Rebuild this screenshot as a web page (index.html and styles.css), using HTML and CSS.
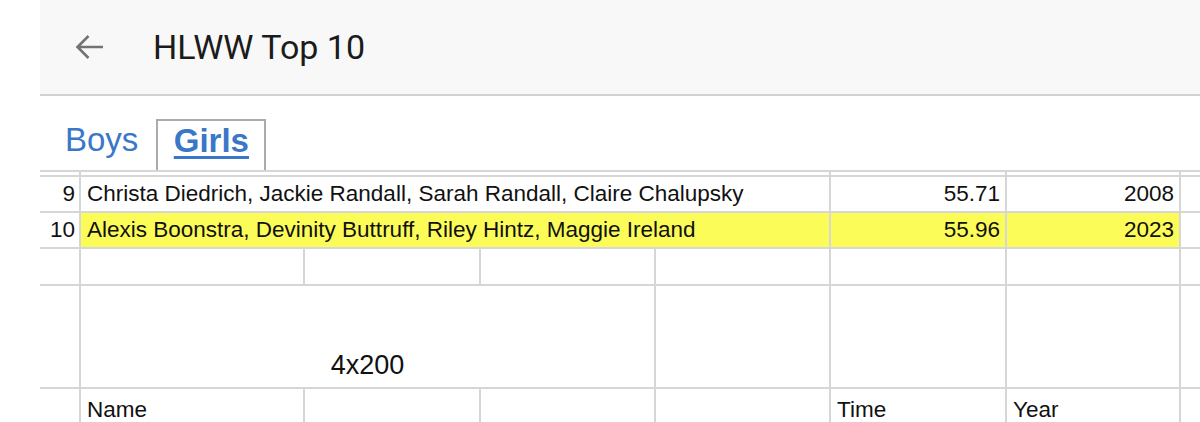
FILE: index.html
```html
<!DOCTYPE html>
<html lang="en">
<head>
<meta charset="utf-8">
<title>HLWW Top 10</title>
<link rel="stylesheet" href="styles.css">
</head>
<body>
<div class="page">
  <header class="appbar">
    <svg class="back" width="30" height="26" viewBox="0 0 30 26" aria-hidden="true">
      <path d="M29 13 H3.5 M14.5 2 L3.5 13 L14.5 24" fill="none" stroke="#737373" stroke-width="2.6"/>
    </svg>
    <h1 class="title">HLWW Top 10</h1>
  </header>
  <nav class="tabs">
    <a class="tab">Boys</a>
    <a class="tab active">Girls</a>
  </nav>
  <table class="sheet">
    <colgroup>
      <col class="c-rn"><col class="c-a"><col class="c-b"><col class="c-c"><col class="c-d"><col class="c-e"><col class="c-f"><col class="c-g">
    </colgroup>
    <tr class="r-mini"><td class="rn"></td><td colspan="4"></td><td></td><td></td><td></td></tr>
    <tr class="r-data"><td class="rn">9</td><td colspan="4">Christa Diedrich, Jackie Randall, Sarah Randall, Claire Chalupsky</td><td class="num">55.71</td><td class="num">2008</td><td></td></tr>
    <tr class="r-data hl"><td class="rn">10</td><td colspan="4" class="y">Alexis Boonstra, Devinity Buttruff, Riley Hintz, Maggie Ireland</td><td class="num y">55.96</td><td class="num y">2023</td><td></td></tr>
    <tr class="r-empty"><td class="rn"></td><td></td><td></td><td></td><td></td><td></td><td></td><td></td></tr>
    <tr class="r-tall"><td class="rn"></td><td colspan="3" class="event">4x200</td><td></td><td></td><td></td><td></td></tr>
    <tr class="r-head"><td class="rn"></td><td>Name</td><td></td><td></td><td></td><td>Time</td><td>Year</td><td></td></tr>
  </table>
</div>
</body>
</html>
```

FILE: styles.css
```css
html, body {
  margin: 0;
  padding: 0;
  background: #ffffff;
  overflow: hidden;
}

.page {
  padding-left: 40px;
  width: 1160px;
}

.appbar {
  height: 94px;
  background: #f8f8f8;
  border-bottom: 2px solid #d2d2d2;
  display: flex;
  align-items: center;
}

.back {
  margin-left: 34px;
  display: block;
}

.title {
  margin: 0 0 0 49px;
  font-family: Roboto, "Noto Sans", sans-serif;
  font-weight: 400;
  font-size: 34px;
  color: #1b1b1b;
  letter-spacing: 0;
}

.tabs {
  margin-top: 23px;
  height: 51px;
  display: flex;
  align-items: flex-end;
  padding-left: 25px;
  font-family: "Liberation Sans", Arial, sans-serif;
  font-size: 33px;
}

.tab {
  color: #3a77c8;
  line-height: 38px;
  padding-bottom: 11px;
}

.tab:first-child {
  margin-right: 18px;
}

.tab.active {
  box-sizing: border-box;
  width: 110px;
  height: 51px;
  text-align: center;
  font-weight: 700;
  text-decoration: underline;
  text-decoration-thickness: 3px;
  text-underline-offset: 4px;
  border: 2px solid #ababab;
  border-bottom: none;
  padding-top: 1px;
}

.sheet {
  table-layout: fixed;
  border-collapse: collapse;
  width: 1160px;
  font-family: "Liberation Sans", Arial, sans-serif;
  font-size: 22.5px;
  color: #111111;
}

.c-rn { width: 40px; }
.c-a { width: 224px; }
.c-b { width: 176px; }
.c-c { width: 175px; }
.c-d { width: 175px; }
.c-e { width: 176px; }
.c-f { width: 174px; }
.c-g { width: 20px; }

.sheet td {
  border: 2px solid #d6d6d6;
  padding: 0 6px;
  white-space: nowrap;
  overflow: hidden;
  vertical-align: middle;
}

.sheet td:first-child {
  border-left: none;
}

.sheet td:last-child {
  border-right: none;
}

.sheet td.rn {
  text-align: right;
  padding: 0 4px 0 0;
}

.sheet td.num {
  text-align: right;
  padding-right: 5px;
}

.r-mini td {
  height: 3px;
  padding: 0;
}

.r-data td {
  height: 34px;
}

.r-empty td {
  height: 35px;
}

.r-tall td {
  height: 101px;
}

.r-tall td.event {
  height: 95px;
  text-align: center;
  vertical-align: bottom;
  font-size: 27px;
  padding-bottom: 6px;
}

.r-head td {
  height: 22px;
  vertical-align: top;
  padding-top: 8px;
}
.r-head td:empty {
  padding-top: 0;
}

.sheet td.y {
  background: #fcfc58;
}
```
